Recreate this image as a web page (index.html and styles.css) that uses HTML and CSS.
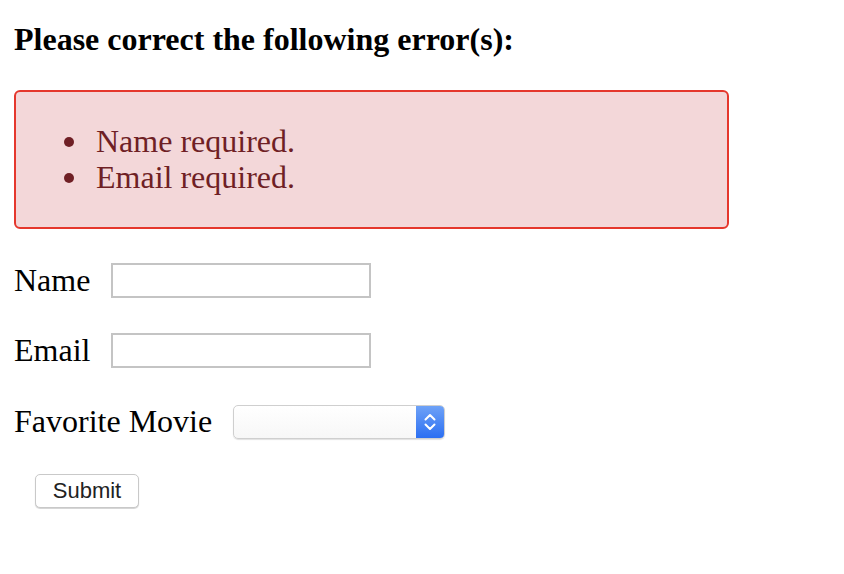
FILE: index.html
```html
<!DOCTYPE html>
<html>
<head>
<meta charset="utf-8">
<link rel="stylesheet" href="styles.css">
</head>
<body>
<div class="page">
  <h4 class="title">Please correct the following error(s):</h4>
  <div class="alert">
    <ul class="errors">
      <li>Name required.</li>
      <li>Email required.</li>
    </ul>
  </div>
  <form class="form">
    <div class="row row-first">
      <label class="label">Name</label>
      <input class="text-input" type="text">
    </div>
    <div class="row">
      <label class="label">Email</label>
      <input class="text-input" type="text">
    </div>
    <div class="row row-movie">
      <label class="label">Favorite Movie</label>
      <div class="select">
        <div class="select-value"></div>
        <div class="select-arrow">
          <svg width="14" height="22" viewBox="0 0 14 22">
            <path d="M2.5 8.5 L7 4 L11.5 8.5" fill="none" stroke="#fff" stroke-width="2" stroke-linecap="round" stroke-linejoin="round"/>
            <path d="M2.5 13.5 L7 18 L11.5 13.5" fill="none" stroke="#fff" stroke-width="2" stroke-linecap="round" stroke-linejoin="round"/>
          </svg>
        </div>
      </div>
    </div>
    <div class="row row-submit">
      <button class="submit" type="button">Submit</button>
    </div>
  </form>
</div>
</body>
</html>
```

FILE: styles.css
```css
html, body {
  margin: 0;
  padding: 0;
  background: #ffffff;
}

.page {
  padding: 0 14px;
  font-family: "Liberation Serif", "Times New Roman", serif;
  font-size: 32px;
  line-height: 37px;
  color: #000;
}

.title {
  margin: 0;
  padding-top: 21px;
  font-size: 32px;
  line-height: 37px;
  font-weight: bold;
}

.alert {
  margin-top: 32px;
  width: 711px;
  height: 135px;
  border: 2px solid #e5372d;
  border-radius: 6px;
  background: #f3d7d9;
  color: #6f1f25;
  box-sizing: content-box;
}

.errors {
  margin: 31px 0 0 0;
  padding-left: 80px;
  list-style: none;
}

.errors li {
  line-height: 36px;
}

.errors li::before {
  content: "";
  display: inline-block;
  width: 10px;
  height: 10px;
  border-radius: 50%;
  background: #6f1f25;
  margin-left: -32px;
  margin-right: 22px;
  vertical-align: 5px;
}

.form {
  margin: 0;
}

.row {
  display: flex;
  align-items: center;
  height: 37px;
  margin-top: 33px;
}

.row-first {
  margin-top: 33px;
}

.row-movie {
  margin-top: 34px;
}

.label {
  margin-right: 21px;
}

.text-input {
  width: 260px;
  height: 35px;
  box-sizing: border-box;
  border: 2px solid #c4c4c4;
  border-radius: 0;
  padding: 0;
  margin: 0;
  background: #fff;
}

.select {
  display: flex;
  width: 212px;
  height: 34px;
  box-sizing: border-box;
  border: 1px solid #cfcfcf;
  border-radius: 5px;
  overflow: hidden;
  background: linear-gradient(#ffffff, #f7f7f7);
  box-shadow: 0 1px 1px rgba(0,0,0,0.12);
}

.select-value {
  flex: 1;
}

.select-arrow {
  width: 28px;
  display: flex;
  align-items: center;
  justify-content: center;
  background: linear-gradient(#6ea2f7, #2c6ff2);
}

.row-submit {
  margin-top: 32px;
}

.submit {
  margin: 0 0 0 21px;
  width: 104px;
  height: 34px;
  box-sizing: border-box;
  border: 1px solid #c9c9c9;
  border-radius: 5px;
  background: #fff;
  box-shadow: 0 1px 1px rgba(0,0,0,0.18);
  font-family: "Liberation Sans", Arial, sans-serif;
  font-size: 22px;
  color: #222;
  padding: 0;
}
```
